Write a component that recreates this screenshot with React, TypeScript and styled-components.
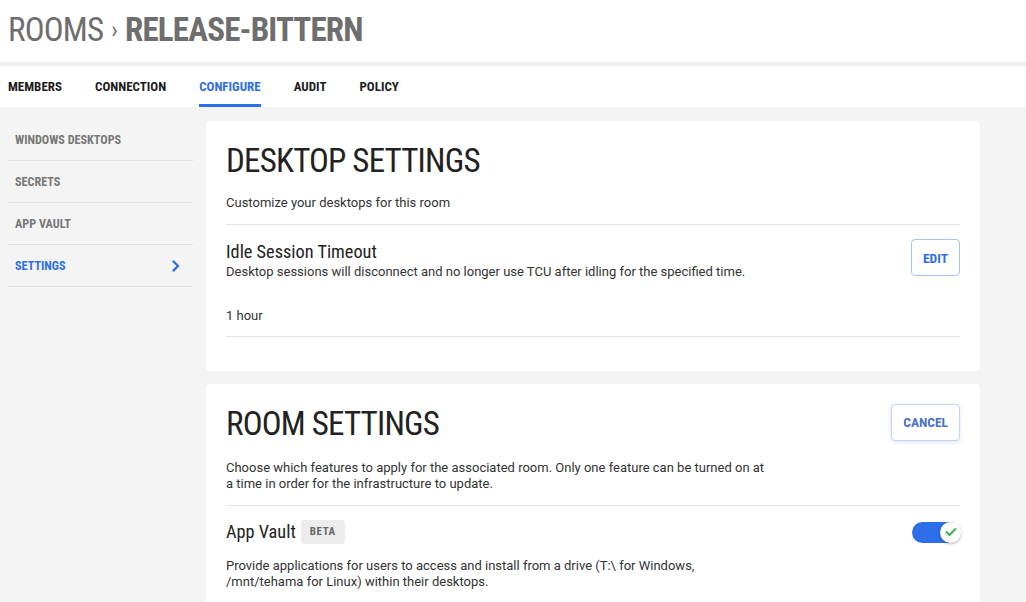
import React, { FC } from "react";
import styled, { createGlobalStyle } from "styled-components";

const BLUE = "#2d6ee9";
const CONDENSED =
  '"Roboto Condensed", "Liberation Sans Narrow", "DejaVu Sans Condensed", Roboto, sans-serif';

const GlobalStyle = createGlobalStyle`
  html, body {
    margin: 0;
    padding: 0;
    background: #f4f4f4;
    font-family: Roboto, "Liberation Sans", sans-serif;
    color: #222;
  }
  * { box-sizing: border-box; }
`;

const tabs = ["MEMBERS", "CONNECTION", "CONFIGURE", "AUDIT", "POLICY"];
const sideItems = ["WINDOWS DESKTOPS", "SECRETS", "APP VAULT", "SETTINGS"];

const Chevron: FC = () => (
  <svg width="10" height="12" viewBox="0 0 10 12">
    <path
      d="M2.5 1.5 L7 6 L2.5 10.5"
      fill="none"
      stroke={BLUE}
      strokeWidth="2.4"
      strokeLinecap="round"
      strokeLinejoin="round"
    />
  </svg>
);

const Toggle: FC<{ on?: boolean }> = ({ on }) => (
  <ToggleTrack $on={on}>
    <ToggleKnob>
      <svg width="12" height="10" viewBox="0 0 12 10">
        <path
          d="M1.5 5 L4.5 8 L10.5 2"
          fill="none"
          stroke="#3db34a"
          strokeWidth="2"
          strokeLinecap="round"
          strokeLinejoin="round"
        />
      </svg>
    </ToggleKnob>
  </ToggleTrack>
);

export default function App() {
  return (
    <>
      <GlobalStyle />
      <Header>
        <Crumb>ROOMS</Crumb>
        <CrumbSep>›</CrumbSep>
        <RoomName>RELEASE-BITTERN</RoomName>
      </Header>
      <TabBar>
        {tabs.map((t) => (
          <Tab key={t} $active={t === "CONFIGURE"}>
            {t}
          </Tab>
        ))}
      </TabBar>
      <Main>
        <Sidebar>
          {sideItems.map((s) => (
            <SideItem key={s} $active={s === "SETTINGS"}>
              {s}
              {s === "SETTINGS" && <Chevron />}
            </SideItem>
          ))}
        </Sidebar>
        <Content>
          <Card>
            <CardTitle>DESKTOP SETTINGS</CardTitle>
            <Intro>Customize your desktops for this room</Intro>
            <Divider />
            <SettingRow>
              <div>
                <SettingName>Idle Session Timeout</SettingName>
                <SettingDesc>
                  Desktop sessions will disconnect and no longer use TCU after
                  idling for the specified time.
                </SettingDesc>
              </div>
              <OutlineButton>EDIT</OutlineButton>
            </SettingRow>
            <Value>1 hour</Value>
            <Divider />
          </Card>
          <Card $tall>
            <CardHead>
              <CardTitle>ROOM SETTINGS</CardTitle>
              <OutlineButton $muted>CANCEL</OutlineButton>
            </CardHead>
            <Paragraph>
              Choose which features to apply for the associated room. Only one
              feature can be turned on at a time in order for the infrastructure
              to update.
            </Paragraph>
            <Divider />
            <FeatureRow>
              <SettingName>
                App Vault <Badge>BETA</Badge>
              </SettingName>
              <Toggle on />
            </FeatureRow>
            <Paragraph $wide>
              Provide applications for users to access and install from a drive
              (T:\ for Windows, /mnt/tehama for Linux) within their desktops.
            </Paragraph>
          </Card>
        </Content>
      </Main>
    </>
  );
}

const Header = styled.header`
  background: #fff;
  height: 66px;
  padding: 10px 0 0 8px;
  display: flex;
  align-items: baseline;
  gap: 8px;
  font-family: ${CONDENSED};
  font-size: 33px;
  letter-spacing: -0.8px;
  color: #6e6e6e;
  border-bottom: 4px solid #efefef;
`;

const Crumb = styled.span`
  font-weight: 400;
`;

const CrumbSep = styled.span`
  font-size: 24px;
  position: relative;
  top: -3px;
`;

const RoomName = styled.span`
  font-weight: 700;
`;

const TabBar = styled.nav`
  background: #fff;
  height: 41px;
  display: flex;
  padding-left: 8px;
  gap: 33px;
`;

const Tab = styled.div<{ $active?: boolean }>`
  font-family: ${CONDENSED};
  font-weight: 700;
  font-size: 13px;
  color: ${(p) => (p.$active ? BLUE : "#1c1c1c")};
  display: flex;
  align-items: center;
  padding-top: 2px;
  border-bottom: 3px solid ${(p) => (p.$active ? BLUE : "transparent")};
`;

const Main = styled.main`
  display: grid;
  grid-template-columns: 185px 774px;
  column-gap: 13px;
  padding: 12px 0 0 8px;
`;

const Sidebar = styled.aside`
  display: flex;
  flex-direction: column;
`;

const SideItem = styled.div<{ $active?: boolean }>`
  height: 42px;
  display: flex;
  align-items: center;
  justify-content: space-between;
  padding: 1px 12px 0 7px;
  border-bottom: 1px solid #e2e2e2;
  font-family: ${CONDENSED};
  font-weight: 700;
  font-size: 12.2px;
  color: ${(p) => (p.$active ? BLUE : "#777")};
`;

const Content = styled.div`
  display: flex;
  flex-direction: column;
  gap: 13px;
  padding-top: 2px;
`;

const Card = styled.section<{ $tall?: boolean }>`
  background: #fff;
  border-radius: 4px;
  padding: 20px 20px ${(p) => (p.$tall ? "20px" : "34px")};
`;

const CardHead = styled.div`
  display: flex;
  justify-content: space-between;
  align-items: center;
`;

const CardTitle = styled.h2`
  margin: 0;
  font-family: ${CONDENSED};
  font-weight: 400;
  font-size: 33px;
  letter-spacing: -0.8px;
  line-height: 40px;
  color: #222;
`;

const Intro = styled.p`
  margin: 14px 0 13px;
  font-size: 13px;
  line-height: 16px;
  color: #333;
`;

const Divider = styled.hr`
  margin: 0;
  border: none;
  border-top: 1px solid #e3e3e3;
`;

const SettingRow = styled.div`
  display: flex;
  justify-content: space-between;
  align-items: flex-start;
  padding-top: 16px;
`;

const SettingName = styled.div`
  font-family: ${CONDENSED};
  font-size: 18.3px;
  line-height: 22px;
  color: #222;
  display: flex;
  align-items: center;
  gap: 5px;
`;

const SettingDesc = styled.div`
  margin-top: 1px;
  font-size: 13px;
  line-height: 16px;
  color: #333;
`;

const OutlineButton = styled.button<{ $muted?: boolean }>`
  background: #fff;
  border: 1.5px solid ${(p) => (p.$muted ? "#c5d4f3" : "#a9c1f5")};
  border-radius: 4px;
  box-shadow: ${(p) => (p.$muted ? "0 1px 4px rgba(45,110,233,0.18)" : "none")};
  padding: 0 11px;
  height: 37px;
  margin-top: ${(p) => (p.$muted ? "-4px" : "-2px")};
  font-family: ${CONDENSED};
  font-weight: 700;
  font-size: 13.5px;
  color: ${(p) => (p.$muted ? "#4a72c4" : BLUE)};
  cursor: pointer;
`;

const Value = styled.div`
  font-size: 13px;
  line-height: 16px;
  color: #333;
  margin: 28px 0 12px;
`;

const Paragraph = styled.p<{ $wide?: boolean }>`
  margin: ${(p) => (p.$wide ? "14px 0 14px" : "16px 0 13px")};
  max-width: ${(p) => (p.$wide ? "480px" : "545px")};
  font-size: 13px;
  line-height: 16px;
  color: #333;
`;

const FeatureRow = styled.div`
  display: flex;
  justify-content: space-between;
  align-items: center;
  padding-top: 14px;
`;

const Badge = styled.span`
  background: #ececec;
  border-radius: 3px;
  padding: 0 9px;
  height: 24px;
  display: inline-flex;
  align-items: center;
  font-family: ${CONDENSED};
  font-weight: 700;
  font-size: 11px;
  color: #666;
  letter-spacing: 0.6px;
`;

const ToggleTrack = styled.div<{ $on?: boolean }>`
  width: 48px;
  height: 21px;
  border-radius: 11px;
  background: ${(p) => (p.$on ? BLUE : "#ccc")};
  display: flex;
  justify-content: ${(p) => (p.$on ? "flex-end" : "flex-start")};
  align-items: center;
`;

const ToggleKnob = styled.div`
  width: 21px;
  height: 21px;
  border-radius: 50%;
  background: #fff;
  box-shadow: 0 1px 3px rgba(0, 0, 0, 0.3);
  display: flex;
  align-items: center;
  justify-content: center;
  margin-right: -1px;
`;
